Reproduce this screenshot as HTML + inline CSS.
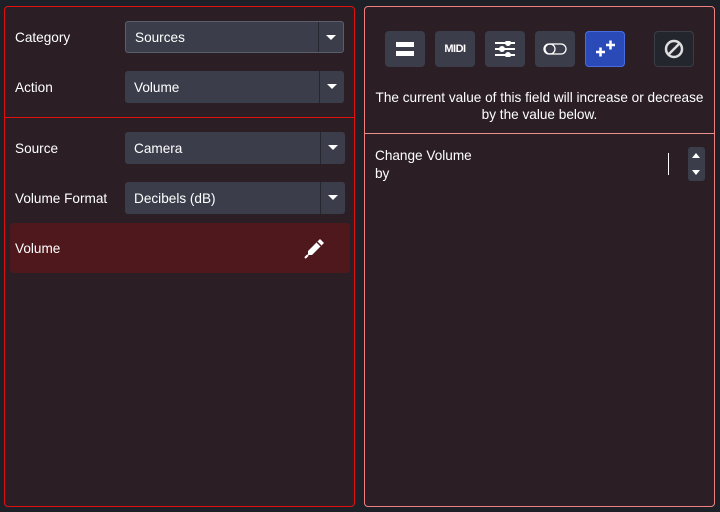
<!DOCTYPE html>
<html><head><style>
body{margin:0;width:720px;height:512px;background:#1e2027;font-family:"Liberation Sans",sans-serif;font-size:13.6px;color:#fff;position:relative;overflow:hidden}
.p{position:absolute;background:#2b1f25;border-radius:4px}
.l{left:4px;top:6px;width:349px;height:499px;border:1px solid #e01010}
.r{left:364px;top:6px;width:349px;height:499px;border:1px solid #f08080}
.lab{position:absolute;left:15px}
.dd{position:absolute;left:125px;width:219px;height:32px;background:#3b3e4a;border-radius:3px;box-sizing:border-box}
.dd span{position:absolute;left:9px;top:9px}
.dd i{position:absolute;right:0;top:0;width:24px;height:32px;border-left:1px solid #25262e}
.dd i:after{content:"";position:absolute;left:7px;top:13px;border-left:5px solid transparent;border-right:5px solid transparent;border-top:5px solid #fff}
.b{position:absolute;top:31px;width:40px;height:36px;background:#3b3e4a;border-radius:4px;display:flex;align-items:center;justify-content:center}
</style></head><body>
<div class="p l"></div>
<div class="p r"></div>
<div class="lab" style="top:30px">Category</div>
<div class="dd" style="top:21px;border:1px solid #5a5e6b"><span style="top:8px">Sources</span><i style="height:30px"></i></div>
<div class="lab" style="top:80px">Action</div>
<div class="dd" style="top:71px"><span>Volume</span><i></i></div>
<div style="position:absolute;left:5px;top:117px;width:349px;height:1px;background:#e01010"></div>
<div class="lab" style="top:141px">Source</div>
<div class="dd" style="top:132px;width:220px"><span>Camera</span><i></i></div>
<div class="lab" style="top:191px">Volume Format</div>
<div class="dd" style="top:182px;width:220px"><span>Decibels (dB)</span><i></i></div>
<div style="position:absolute;left:10px;top:223px;width:340px;height:50px;background:#4f181d;border-radius:4px"></div>
<div class="lab" style="top:241px">Volume</div>
<svg style="position:absolute;left:304px;top:237px" width="22" height="22" viewBox="0 0 22 22"><path d="M16 2l4 4-12 12H4v-4z" fill="#fff"/><path d="M13 5l4 4" stroke="#4f181d" stroke-width="1.5"/><path d="M1 21l3-3" stroke="#fff" stroke-width="2"/></svg>
<div class="b" style="left:385px"><svg width="18" height="14"><rect y="0" width="18" height="5" fill="#fff"/><rect y="9" width="18" height="5" fill="#fff"/></svg></div>
<div class="b" style="left:435px;font-weight:bold;font-size:11px;letter-spacing:-0.5px">MIDI</div>
<div class="b" style="left:485px"><svg width="20" height="16" stroke="#fff" stroke-width="2"><path d="M0 2h20M0 8h20M0 14h20"/><circle cx="13" cy="2" r="2" fill="#fff"/><circle cx="7" cy="8" r="2" fill="#fff"/><circle cx="13" cy="14" r="2" fill="#fff"/></svg></div>
<div class="b" style="left:535px"><svg width="24" height="14" fill="none" stroke="#fff" stroke-width="1.3"><rect x="1" y="2" width="22" height="10" rx="5"/><circle cx="7" cy="7" r="5"/></svg></div>
<div class="b" style="left:585px;background:#2a4ab8;box-shadow:inset 0 0 0 1px #4a6ae0"><svg width="22" height="20" stroke="#fff" stroke-width="2.5"><path d="M2 13h9M6.5 8.5v9M12 6h9M16.5 1.5v9"/></svg></div>
<div class="b" style="left:654px;background:#24262e;box-shadow:inset 0 0 0 1px #3a3d48"><svg width="20" height="20" fill="none" stroke="#ddd" stroke-width="2.5"><circle cx="10" cy="10" r="8"/><path d="M4.5 15.5l11-11"/></svg></div>
<div style="position:absolute;left:365px;top:89px;width:349px;text-align:center;line-height:17px">The current value of this field will increase or decrease<br>by the value below.</div>
<div style="position:absolute;left:365px;top:133px;width:349px;height:1px;background:#e89090"></div>
<div style="position:absolute;left:375px;top:147px;line-height:18px">Change Volume<br>by</div>
<div style="position:absolute;left:668px;top:153px;width:1px;height:22px;border-left:1px solid #fff"></div>
<div style="position:absolute;left:688px;top:147px;width:17px;height:34px;background:#3b3e4a;border-radius:3px"><div style="position:absolute;left:4px;top:6px;border-left:4px solid transparent;border-right:4px solid transparent;border-bottom:5px solid #fff"></div><div style="position:absolute;left:4px;top:23px;border-left:4px solid transparent;border-right:4px solid transparent;border-top:5px solid #fff"></div></div>
</body></html>
